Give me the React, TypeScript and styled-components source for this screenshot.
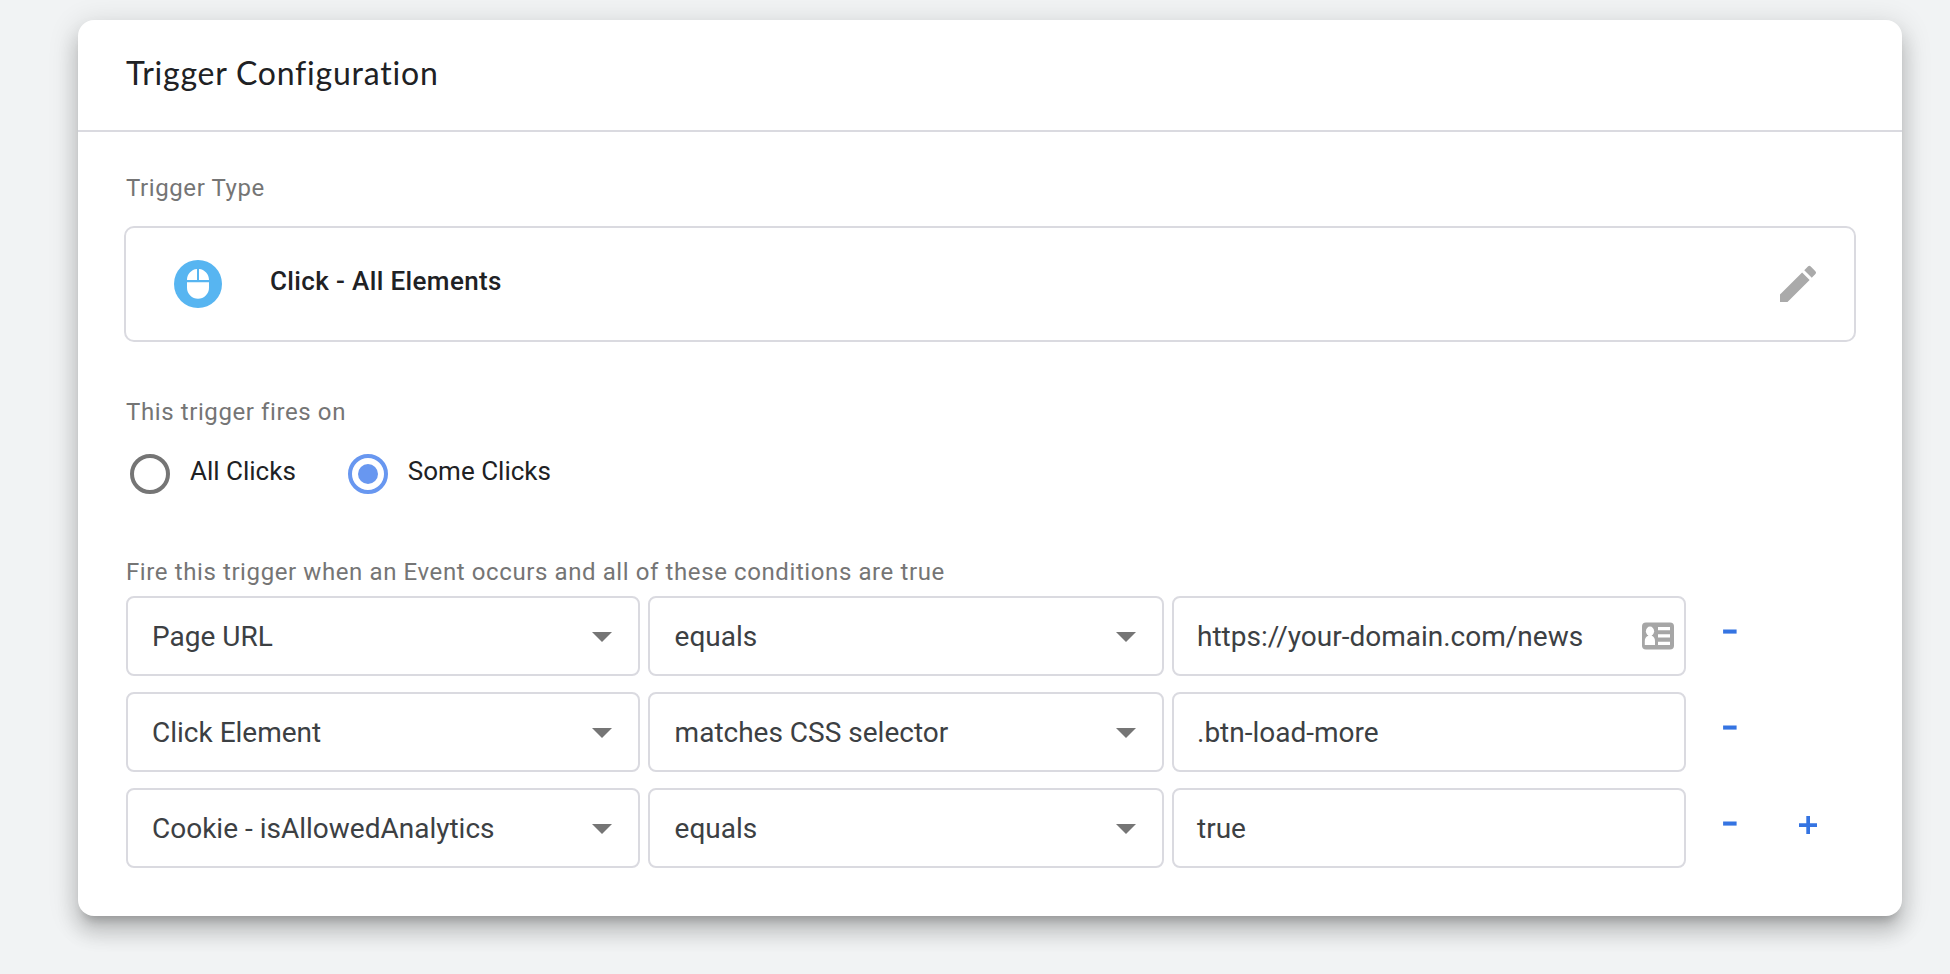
import React, { useState } from "react";
import styled, { createGlobalStyle } from "styled-components";

const GlobalStyle = createGlobalStyle`
  *, *::before, *::after { box-sizing: border-box; }
  body {
    margin: 0;
    min-height: 100vh;
    background: #f1f3f4;
    font-family: Roboto, "Liberation Sans", sans-serif;
    -webkit-font-smoothing: antialiased;
  }
`;

const Page = styled.div`
  padding: 20px 48px 58px 78px;
`;

const Card = styled.section`
  background: #fff;
  border-radius: 16px;
  box-shadow:
    0 16px 20px 2px rgba(0, 0, 0, 0.14),
    0 6px 28px 4px rgba(0, 0, 0, 0.12),
    0 10px 10px -6px rgba(0, 0, 0, 0.2);
`;

const CardHeader = styled.header`
  display: flex;
  align-items: flex-start;
  height: 112px;
  padding: 33px 48px 0;
  border-bottom: 2px solid #dadae0;
`;

const Title = styled.h1`
  margin: 0;
  font: 400 32px/40px Lato, "Open Sans", sans-serif;
  letter-spacing: 0.78px;
  color: #202124;
`;

const CardBody = styled.div`
  display: flex;
  flex-direction: column;
  padding: 40px 46px 48px;
`;

const Section = styled.div<{ $gap: number; $above?: number }>`
  display: flex;
  flex-direction: column;
  gap: ${(p) => p.$gap}px;
  margin-top: ${(p) => p.$above ?? 0}px;
`;

const Label = styled.div`
  padding-left: 2px;
  font-size: 24px;
  line-height: 32px;
  letter-spacing: 0.6px;
  color: #757575;
  white-space: nowrap;
`;

const TypeBox = styled.div`
  display: flex;
  align-items: center;
  height: 116px;
  padding: 0 32px 0 48px;
  border: 2px solid #dadae0;
  border-radius: 10px;
`;

const TypeName = styled.div`
  flex: 1;
  margin: 0 0 6px 48px;
  font-size: 26px;
  font-weight: 500;
  line-height: 36px;
  letter-spacing: 0.37px;
  color: #202124;
`;

const Icon = styled.svg`
  display: block;
  flex: none;
`;

const RadioRow = styled.div`
  display: flex;
  gap: 52px;
  padding-left: 6px;
`;

const RadioOption = styled.div`
  display: flex;
  align-items: center;
  gap: 20px;
  height: 40px;
  cursor: pointer;
`;

const RadioMark = styled.span<{ $on: boolean }>`
  display: flex;
  align-items: center;
  justify-content: center;
  width: 40px;
  height: 40px;
  border: 4px solid ${(p) => (p.$on ? "#6897f0" : "#757575")};
  border-radius: 50%;

  &::after {
    content: "";
    width: 20px;
    height: 20px;
    border-radius: 50%;
    background: ${(p) => (p.$on ? "#6897f0" : "transparent")};
  }
`;

const RadioText = styled.span`
  margin-bottom: 6px;
  font-size: 26px;
  line-height: 32px;
  color: #202124;
`;

const Conditions = styled.div`
  display: flex;
  flex-direction: column;
  gap: 16px;
  padding-left: 2px;
`;

const ConditionRow = styled.div`
  display: grid;
  grid-template-columns: 514px 516px 514px auto;
  column-gap: 8px;
  height: 80px;
`;

const Field = styled.div`
  display: flex;
  align-items: center;
  justify-content: space-between;
  border: 2px solid #dadae0;
  border-radius: 8px;
`;

const SelectField = styled(Field)<{ $inset: number }>`
  padding: 0 26px 0 ${(p) => p.$inset}px;
`;

const TextField = styled(Field)`
  padding: 0 10px 0 23px;
`;

const FieldText = styled.span`
  margin-top: 2px;
  font-size: 28px;
  line-height: 32px;
  color: #3c4043;
  white-space: nowrap;
`;

const Caret = styled.span`
  margin-top: 2px;
  border: 10px solid transparent;
  border-top-color: #757575;
  border-bottom: 0;
`;

const Actions = styled.div`
  display: flex;
  gap: 62px;
  padding: 28px 0 0 29px;
`;

const ActionButton = styled.button`
  display: block;
  height: 20px;
  padding: 0;
  border: 0;
  background: none;
  cursor: pointer;
`;

const MouseIcon = () => (
  <Icon width="48" height="48" viewBox="0 0 48 48">
    <circle cx="24" cy="24" r="24" fill="#57b5f1" />
    <path
      fill="#fff"
      d="M23 9.100V20H13v-.2C13 14.200 17.300 9.600 23 9.100zM25 9.100V20h10v-.2C35 14.200 30.700 9.600 25 9.100zM13 22.200h22v5.600a11 11 0 0 1-22 0z"
    />
  </Icon>
);

const PencilIcon = () => (
  <Icon width="48" height="48" viewBox="0 0 24 24" fill="#aaa">
    <path d="M3 17.250V21h3.750L17.810 9.940l-3.750-3.750L3 17.250zM20.710 7.040a.996.996 0 0 0 0-1.410l-2.340-2.340a.996.996 0 0 0-1.410 0l-1.830 1.830 3.750 3.750 1.830-1.830z" />
  </Icon>
);

const ContactIcon = () => (
  <Icon width="32" height="28" viewBox="0 0 32 28">
    <rect y=".4" width="32" height="27.200" rx="4" fill="#a6a6a6" />
    <ellipse cx="8" cy="9.300" rx="4.100" ry="4.700" fill="#fff" />
    <path
      fill="#fff"
      d="M6.300 12.500h3.400v1.300c2.200.8 3.300 2.700 3.300 5.200v4H2.800v-4c0-2.500 1.200-4.400 3.500-5.200zM16 5h12v3.200H16zM16 12.300h12v3.200H16zM16 19.800h12V23H16z"
    />
  </Icon>
);

const MinusIcon = () => (
  <Icon width="14" height="20" viewBox="0 0 14 20">
    <rect x=".1" y="5.500" width="13.500" height="4.100" fill="#3574e2" />
  </Icon>
);

const PlusIcon = () => (
  <Icon width="18" height="20" viewBox="0 0 18 20">
    <path fill="#3574e2" d="M7.300 0H11v7.200h7V11h-7v7H7.300v-7H0V7.200h7.300z" />
  </Icon>
);

const conditions = [
  { variable: "Page URL", operator: "equals", value: "https://your-domain.com/news" },
  { variable: "Click Element", operator: "matches CSS selector", value: ".btn-load-more" },
  { variable: "Cookie - isAllowedAnalytics", operator: "equals", value: "true" },
];

const clickOptions = ["All Clicks", "Some Clicks"];

export default function App() {
  const [fires, setFires] = useState("Some Clicks");

  return (
    <>
      <GlobalStyle />
      <Page>
        <Card>
          <CardHeader>
            <Title>Trigger Configuration</Title>
          </CardHeader>
          <CardBody>
            <Section $gap={22}>
              <Label>Trigger Type</Label>
              <TypeBox>
                <MouseIcon />
                <TypeName>Click - All Elements</TypeName>
                <PencilIcon />
              </TypeBox>
            </Section>
            <Section $gap={26} $above={54}>
              <Label>This trigger fires on</Label>
              <RadioRow role="radiogroup">
                {clickOptions.map((name) => (
                  <RadioOption
                    key={name}
                    role="radio"
                    aria-checked={fires === name}
                    onClick={() => setFires(name)}
                  >
                    <RadioMark $on={fires === name} />
                    <RadioText>{name}</RadioText>
                  </RadioOption>
                ))}
              </RadioRow>
            </Section>
            <Section $gap={8} $above={62}>
              <Label>
                Fire this trigger when an Event occurs and all of these conditions are true
              </Label>
              <Conditions>
                {conditions.map((c, i) => (
                  <ConditionRow key={c.variable}>
                    <SelectField $inset={24}>
                      <FieldText>{c.variable}</FieldText>
                      <Caret />
                    </SelectField>
                    <SelectField $inset={24.6}>
                      <FieldText>{c.operator}</FieldText>
                      <Caret />
                    </SelectField>
                    <TextField>
                      <FieldText>{c.value}</FieldText>
                      {i === 0 && <ContactIcon />}
                    </TextField>
                    <Actions>
                      <ActionButton aria-label="Remove condition">
                        <MinusIcon />
                      </ActionButton>
                      {i === conditions.length - 1 && (
                        <ActionButton aria-label="Add condition">
                          <PlusIcon />
                        </ActionButton>
                      )}
                    </Actions>
                  </ConditionRow>
                ))}
              </Conditions>
            </Section>
          </CardBody>
        </Card>
      </Page>
    </>
  );
}
